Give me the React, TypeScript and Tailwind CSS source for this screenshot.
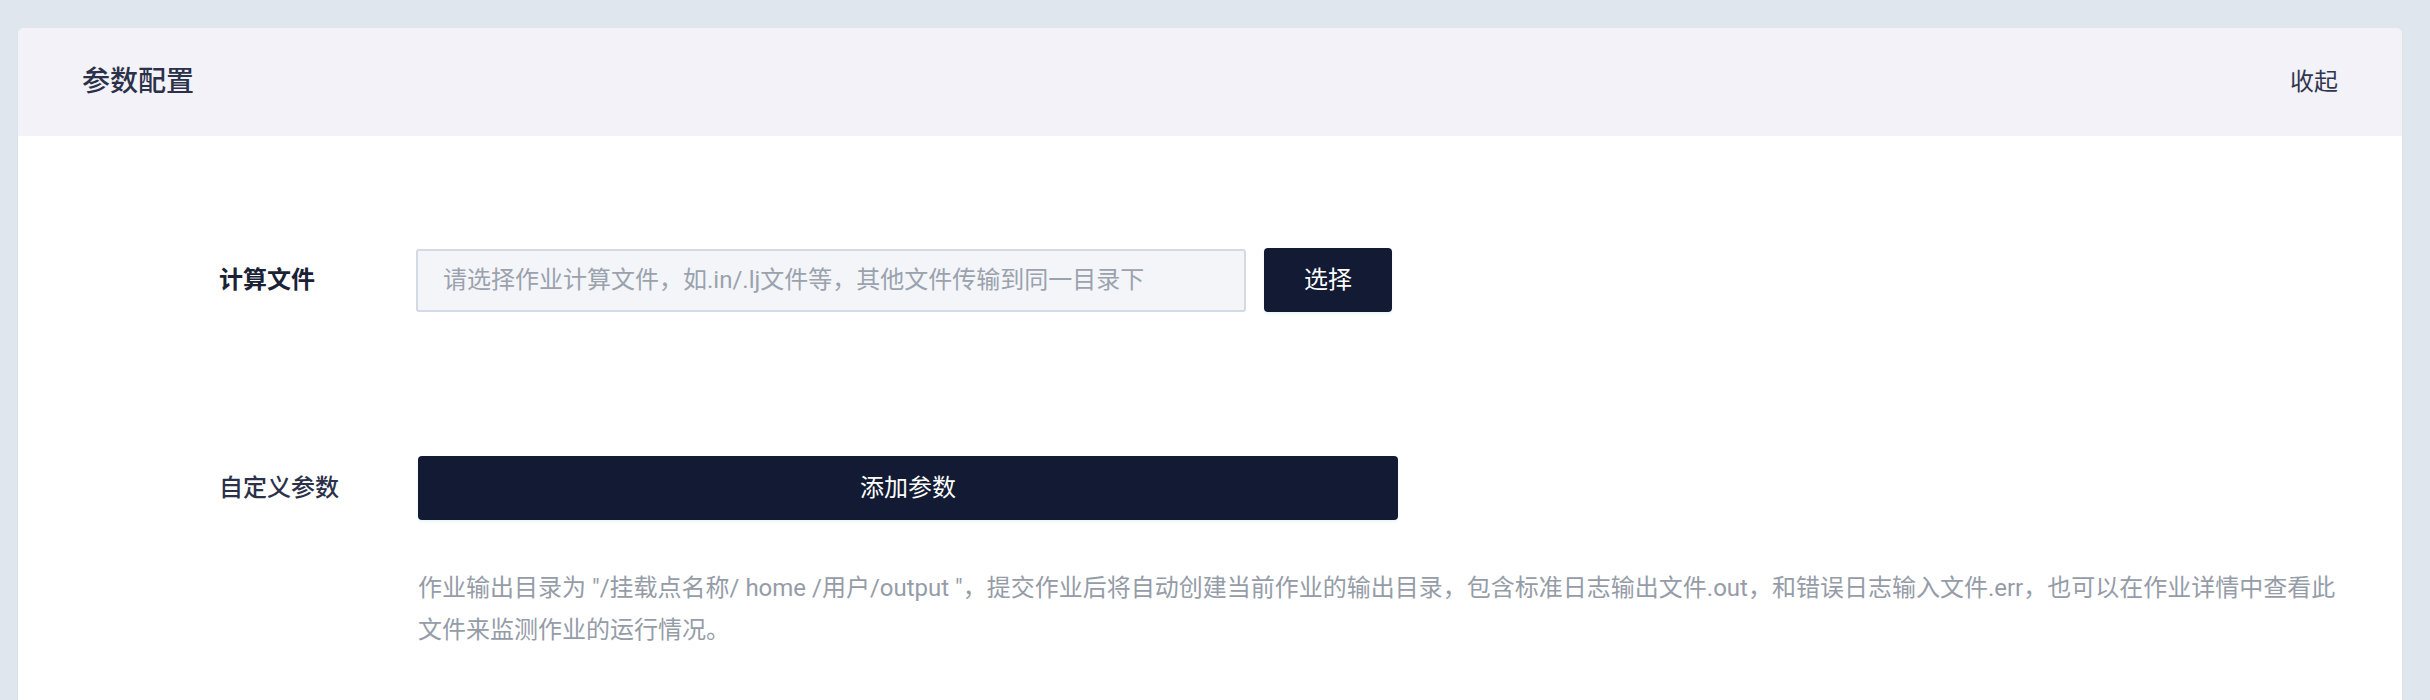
import React from "react";

const FONT = 'Roboto, "Noto Sans CJK SC", "Noto Sans", sans-serif';

export default function App() {
  return (
    <div
      className="w-[2430px] h-[700px] overflow-hidden bg-[#e0e6ee] pl-[18px] pr-[28px] pt-[28px]"
      style={{ fontFamily: FONT }}
    >
      <div className="h-[700px] rounded-[6px] bg-white shadow-[0_1px_2px_rgba(15,23,42,0.06)] overflow-hidden">
        <div className="h-[108px] bg-[#f3f2f8] flex items-center justify-between px-[64px]">
          <div className="text-[28px] font-medium text-[#2a3149]">参数配置</div>
          <button className="text-[24px] text-[#2f3650]">收起</button>
        </div>
        <div className="pt-[112px] pl-[201px] pr-[64px]">
          <div className="flex items-center h-[64px]">
            <div className="w-[197px] text-[24px] font-semibold text-[#1a2236]">计算文件</div>
            <div className="w-[830px] h-[63px] border-2 border-[#d3d9e5] bg-[#f3f5f9] rounded-[3px] flex items-center pl-[25px] text-[24px] text-[#9aa2ae]">
              请选择作业计算文件，如.in/.lj文件等，其他文件传输到同一目录下
            </div>
            <button className="ml-[18px] w-[128px] h-[64px] rounded-[4px] bg-[#121b33] text-white text-[24px] shadow-[0_2px_3px_rgba(120,200,190,0.15)]">
              选择
            </button>
          </div>
          <div className="flex items-center h-[64px] mt-[144px]">
            <div className="w-[199px] text-[24px] font-medium text-[#2a3149]">自定义参数</div>
            <button className="w-[980px] h-[64px] rounded-[4px] bg-[#121b33] text-white text-[24px] shadow-[0_2px_3px_rgba(120,200,190,0.15)]">
              添加参数
            </button>
          </div>
          <div className="mt-[47px] ml-[199px] text-[24px] leading-[42px] text-[#959ca8]">
            作业输出目录为 "/挂载点名称/ home /用户/output "，提交作业后将自动创建当前作业的输出目录，包含标准日志输出文件.out，和错误日志输入文件.err，也可以在作业详情中查看此文件来监测作业的运行情况。
          </div>
        </div>
      </div>
    </div>
  );
}
